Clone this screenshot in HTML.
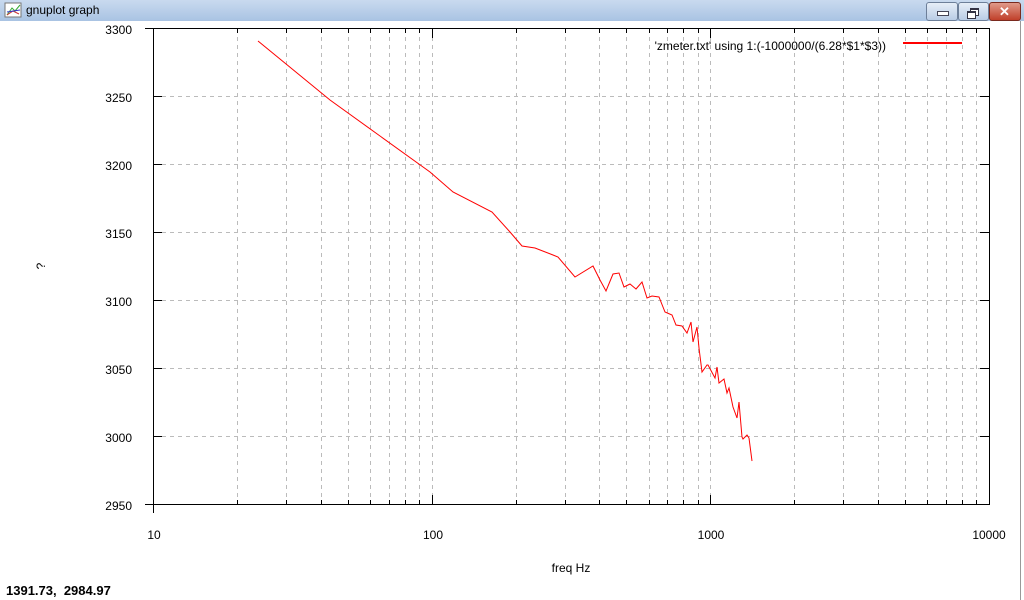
<!DOCTYPE html>
<html><head><meta charset="utf-8"><style>
html,body{margin:0;padding:0;width:1024px;height:600px;overflow:hidden;background:#fff;font-family:"Liberation Sans",Arial,sans-serif}
#tb{position:absolute;left:0;top:0;width:1024px;height:21px;background:linear-gradient(#c9daef,#a9c3e3);}
#tb .t{position:absolute;left:26px;top:3px;font-size:12px;color:#000}
.btn{position:absolute;top:2px;height:17px;border:1px solid #6d7f99;border-radius:3px;background:linear-gradient(#e6eef8,#b9cce5)}
svg{position:absolute;left:0;top:0}
#leg{position:absolute;left:903px;top:42px;width:59px;height:2px;background:#ff0000}
</style></head><body>
<div id="tb"><svg width="18" height="16" style="left:4px;top:2px"><rect x="1" y="1" width="16" height="14" fill="#fff" stroke="#777"/><path d="M3 13 L8 6 L11 9 L16 3" stroke="#3a3" fill="none"/><path d="M3 13 L9 9 L15 12" stroke="#c33" fill="none"/><path d="M3 10 L16 8" stroke="#33c" fill="none"/></svg><span class="t">gnuplot graph</span>
<div class="btn" style="left:926px;width:30px"><div style="position:absolute;left:10px;top:8px;width:10px;height:3px;background:#fff;border:1px solid #445"></div></div>
<div class="btn" style="left:958px;width:29px"><div style="position:absolute;left:11px;top:5px;width:7px;height:5px;border:1px solid #334;border-top-width:2px;background:#fff"></div><div style="position:absolute;left:8px;top:8px;width:7px;height:5px;border:1px solid #334;border-top-width:2px;background:#fff"></div></div>
<div class="btn" style="left:989px;width:30px;background:linear-gradient(#e09a8a,#c0402a);border-color:#7a2a1e"><div style="position:absolute;left:9px;top:1px;color:#fff;font-weight:bold;font-size:13px">✕</div></div>
</div>
<svg id="s" width="1024" height="600" style="top:0">
<line x1="1020.5" y1="21" x2="1020.5" y2="600" stroke="#999"/>
<g id="g"></g>
<rect x="153.5" y="28.5" width="836" height="476" fill="none" stroke="#000"/>
<g font-size="12" fill="#000" text-anchor="end">
<text x="132" y="34">3300</text><text x="132" y="102">3250</text><text x="132" y="170">3200</text><text x="132" y="238">3150</text><text x="132" y="306">3100</text><text x="132" y="374">3050</text><text x="132" y="442">3000</text><text x="132" y="510">2950</text>
</g>
<g font-size="12" fill="#000" text-anchor="middle">
<text x="154" y="539">10</text><text x="433" y="539">100</text><text x="711" y="539">1000</text><text x="989" y="539">10000</text>
<text x="571" y="572">freq Hz</text>
<text x="0" y="0" transform="translate(45,266) rotate(-90)">?</text>
</g>
<text x="886" y="50" font-size="12" text-anchor="end">'zmeter.txt' using 1:(-1000000/(6.28*$1*$3))</text>
<polyline fill="none" stroke="#f00" stroke-width="1" points="258,41 330,100 430,172 453,192 492,212 510,232 522,246 535,248 553,255 558,257 575,277 593,266 600,280 606,291 613,274 619,273 624,287 630,284 636,289 642,282 647,298 652,296 659,297 665,312 672,315 676,325 682,326 687,333 691,322 693,342 697,327 699,348 702,372 707,365 708,365 715,378 717,367 719,383 724,379 727,393 729,388 733,407 737,418 739,402 742,437 743,439 747,435 749,438 752,461"/>
<text x="6" y="595" font-size="13" font-weight="bold" style="white-space:pre" xml:space="preserve">1391.73,  2984.97</text>
</svg>
<div id="leg"></div>
<script>
var g=document.getElementById('g'),h='';
function L(a,b,c,d,s){h+='<line x1="'+a+'" y1="'+b+'" x2="'+c+'" y2="'+d+'" '+s+'/>';}
var D='stroke="#bbb" stroke-dasharray="4,4"';
for(var d=0;d<3;d++)for(var m=1;m<10;m++){var x=Math.round(153+278.67*(d+Math.log10(m)))+0.5;
 if(!(d==0&&m==1))L(x,29,x,504,D);
 var t=(m==1)?9:4;L(x,504,x,504-t,'stroke="#000"');L(x,29,x,29+t,'stroke="#000"');}
for(var i=1;i<7;i++){var y=Math.round(504-i*67.95)+0.5;L(154,y,989,y,D);L(153,y,162,y,'stroke="#000"');L(989,y,980,y,'stroke="#000"');}
L(145,504.5,153,504.5,'stroke="#000"');L(145,28.5,153,28.5,'stroke="#000"');L(153.5,504,153.5,513,'stroke="#000"');
g.innerHTML=h;
</script>
</body></html>
